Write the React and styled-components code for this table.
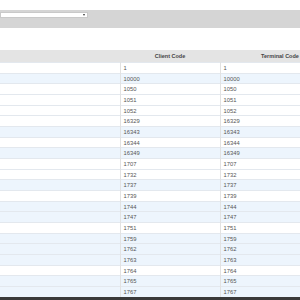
import React from 'react';
import styled, { createGlobalStyle } from 'styled-components';

const GlobalStyle = createGlobalStyle`
  html, body {
    margin: 0;
    padding: 0;
    background: #ffffff;
    overflow: hidden;
  }
  body {
    font-family: "Liberation Sans", Arial, sans-serif;
  }
`;

const Page = styled.div`
  width: 300px;
  height: 300px;
  padding-top: 10px;
  box-sizing: border-box;
  display: flex;
  flex-direction: column;
  position: relative;
  overflow: hidden;
`;

const FilterBar = styled.div`
  height: 18px;
  background: #d5d5d5;
  padding-top: 2px;
  box-sizing: border-box;
`;

const Select = styled.div`
  width: 88px;
  height: 6px;
  background: #ffffff;
  border: 0.5px solid #c9c9c9;
  box-sizing: border-box;
  display: flex;
  justify-content: flex-end;
  align-items: center;
  padding-right: 2px;
`;

const Caret = styled.span`
  width: 0;
  height: 0;
  border-left: 1.5px solid transparent;
  border-right: 1.5px solid transparent;
  border-top: 2px solid #333;
`;

const Spacer = styled.div`
  height: 22px;
`;

const Table = styled.table`
  width: 340px;
  border-collapse: collapse;
  table-layout: fixed;
  font-size: 5.8px;
  color: #555;
`;

const HeadCell = styled.th`
  height: 12px;
  padding: 0;
  background: #e4e4e4;
  font-weight: bold;
  color: #444;
  font-size: 5.5px;
  text-align: center;
`;

const Row = styled.tr`
  height: 10.68px;
  background: ${(p) => (p.$tint ? '#edf5fd' : '#ffffff')};
  border-top: 1px solid #e3e8ee;
`;

const Cell = styled.td`
  padding: 0 0 0 3px;
  border-left: ${(p) => (p.$divider ? '1px solid #e2e2e2' : 'none')};
  white-space: nowrap;
  overflow: hidden;
`;

const BottomBar = styled.div`
  position: absolute;
  left: 0;
  right: 0;
  bottom: 0;
  height: 3px;
  background: #3a3a3a;
`;

const rows = [
  ['1', false],
  ['10000', true],
  ['1050', false],
  ['1051', false],
  ['1052', false],
  ['16329', false],
  ['16343', true],
  ['16344', false],
  ['16349', true],
  ['1707', false],
  ['1732', false],
  ['1737', true],
  ['1739', false],
  ['1744', true],
  ['1747', true],
  ['1751', false],
  ['1759', true],
  ['1762', true],
  ['1763', true],
  ['1764', false],
  ['1765', true],
  ['1767', true],
];

export default function App() {
  return (
    <>
      <GlobalStyle />
      <Page>
        <FilterBar>
          <Select>
            <Caret />
          </Select>
        </FilterBar>
        <Spacer />
        <Table>
          <colgroup>
            <col style={{ width: 120 }} />
            <col style={{ width: 100 }} />
            <col style={{ width: 120 }} />
          </colgroup>
          <thead>
            <tr>
              <HeadCell />
              <HeadCell>Client Code</HeadCell>
              <HeadCell>Terminal Code</HeadCell>
            </tr>
          </thead>
          <tbody>
            {rows.map(([code, tint]) => (
              <Row key={code} $tint={tint}>
                <Cell />
                <Cell $divider>{code}</Cell>
                <Cell $divider>{code}</Cell>
              </Row>
            ))}
          </tbody>
        </Table>
        <BottomBar />
      </Page>
    </>
  );
}
